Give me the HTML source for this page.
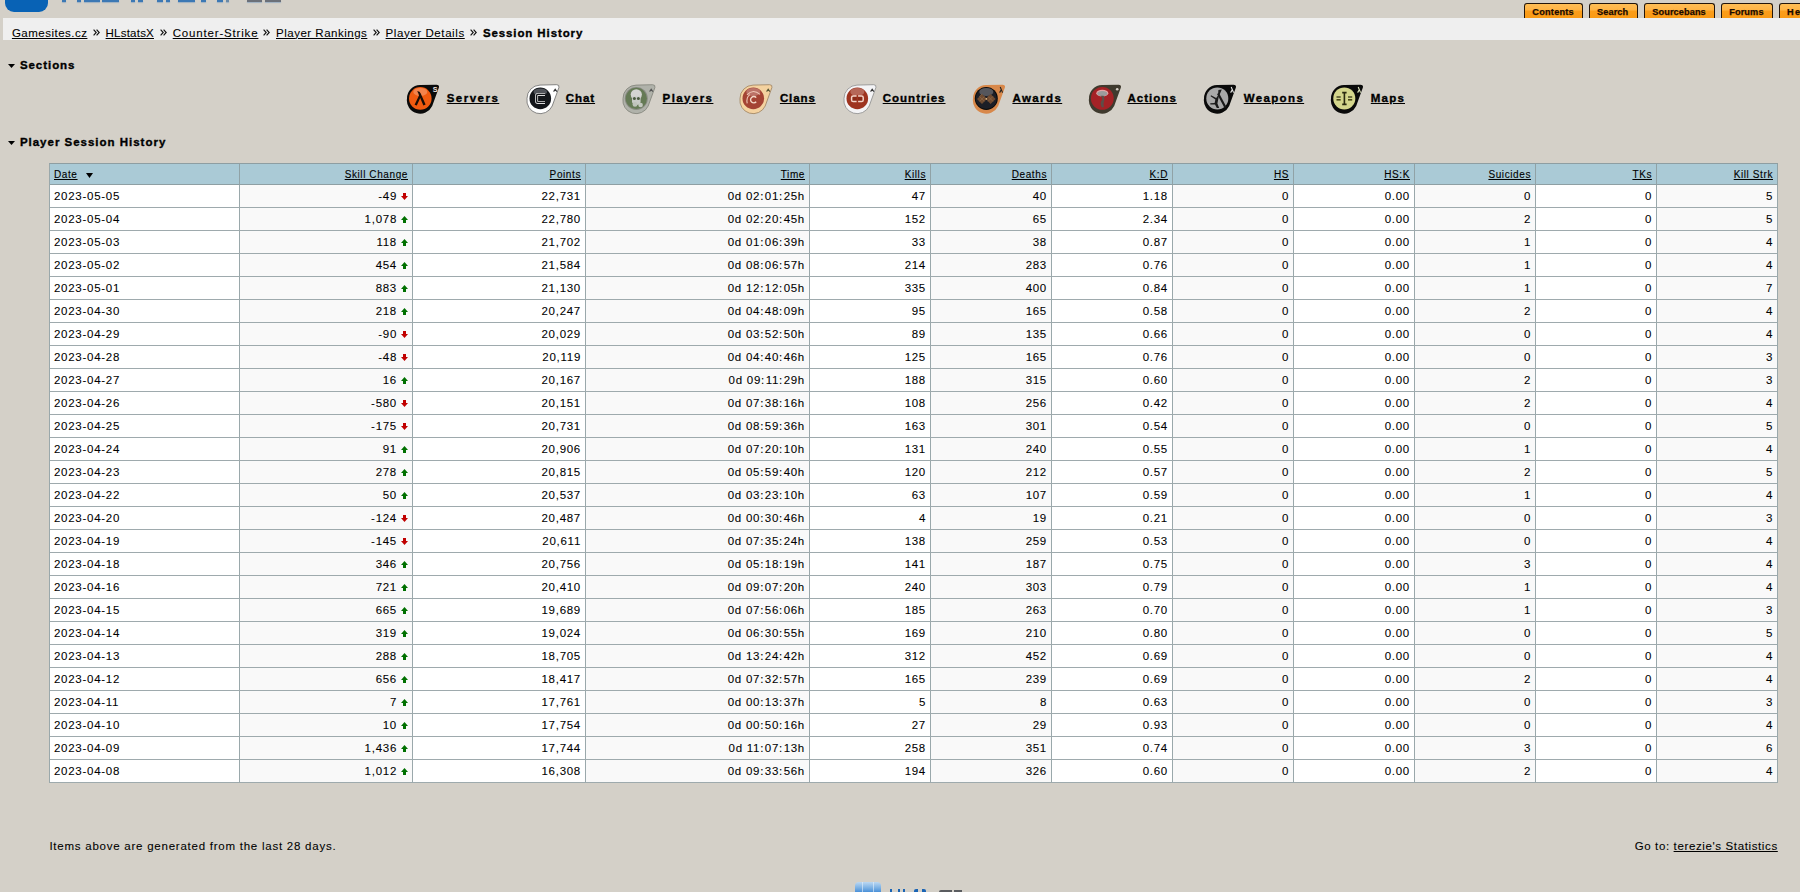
<!DOCTYPE html>
<html><head><meta charset="utf-8"><title>Session History</title>
<style>
html,body{margin:0;padding:0}
body{width:1800px;height:892px;overflow:hidden;position:relative;background:#d4d0c8;font-family:"Liberation Sans", sans-serif;color:#000}
.a{position:absolute;white-space:nowrap;text-underline-offset:1px}
.bar{position:absolute;left:3px;top:18px;width:1797px;height:22px;background:#efefef}
.tab{position:absolute;top:3px;height:15px;border:1px solid #24160a;border-bottom:none;border-radius:3px 3px 0 0;box-sizing:border-box;background:linear-gradient(#ffbe55 0,#ffb445 6px,#fb9d1a 7px,#f99a14 100%)}
.tri{position:absolute;left:8px;width:0;height:0;border-left:3.5px solid transparent;border-right:3.5px solid transparent;border-top:4px solid #000}
table.dt{position:absolute;left:49px;top:163px;border-collapse:separate;border-spacing:0;table-layout:fixed;width:1729px;border-left:1px solid #9aa8ab;border-top:1px solid #8e9ea2}
.dt td{box-sizing:border-box;border-right:1px solid #9aa8ab;border-bottom:1px solid #9eaaad;padding:0 4px 0 4px;text-align:right;white-space:nowrap;overflow:hidden}
.dt td.c0{text-align:left}
.dt td.h{-webkit-text-stroke:0.1px #000;height:21px;background:#aacad6;font-size:10px;line-height:19px;padding-top:1px;letter-spacing:0.599px;border-bottom-color:#8e9fa3;border-right-color:#90a2a6}
.dt td.h u{text-underline-offset:1px}
.dt td.d{-webkit-text-stroke:0.08px #000;height:23px;font-size:11.5px;line-height:22px;letter-spacing:0.725px;color:#000}
.b1{background:#ffffff}
.cl{letter-spacing:1.4px}
.b2{background:#f9f9f9}
.ar{display:inline-block;vertical-align:baseline;margin-left:4px;position:relative;top:0px}
.st{display:inline-block;margin-left:8px;vertical-align:baseline}
.ic{position:absolute;top:83px;width:34px;height:32px}
</style></head><body>
<div style="position:absolute;left:5px;top:-12px;width:43px;height:24px;border-radius:9px;background:#0862b5"></div>
<div style="position:absolute;left:62px;top:0;width:4px;height:2px;background:#3c78b4;box-shadow:0 1px 1px rgba(60,120,190,0.35)"></div><div style="position:absolute;left:77px;top:0;width:4px;height:2px;background:#3c78b4;box-shadow:0 1px 1px rgba(60,120,190,0.35)"></div><div style="position:absolute;left:84px;top:0;width:16px;height:2px;background:#3c78b4;box-shadow:0 1px 1px rgba(60,120,190,0.35)"></div><div style="position:absolute;left:102px;top:0;width:17px;height:2px;background:#3c78b4;box-shadow:0 1px 1px rgba(60,120,190,0.35)"></div><div style="position:absolute;left:131px;top:0;width:4px;height:2px;background:#3c78b4;box-shadow:0 1px 1px rgba(60,120,190,0.35)"></div><div style="position:absolute;left:138px;top:0;width:5px;height:2px;background:#3c78b4;box-shadow:0 1px 1px rgba(60,120,190,0.35)"></div><div style="position:absolute;left:157px;top:0;width:6px;height:2px;background:#3c78b4;box-shadow:0 1px 1px rgba(60,120,190,0.35)"></div><div style="position:absolute;left:166px;top:0;width:4px;height:2px;background:#3c78b4;box-shadow:0 1px 1px rgba(60,120,190,0.35)"></div><div style="position:absolute;left:178px;top:0;width:17px;height:2px;background:#3c78b4;box-shadow:0 1px 1px rgba(60,120,190,0.35)"></div><div style="position:absolute;left:201px;top:0;width:5px;height:2px;background:#3c78b4;box-shadow:0 1px 1px rgba(60,120,190,0.35)"></div><div style="position:absolute;left:217px;top:0;width:6px;height:2px;background:#3c78b4;box-shadow:0 1px 1px rgba(60,120,190,0.35)"></div><div style="position:absolute;left:226px;top:0;width:3px;height:2px;background:#6a8aa8;box-shadow:0 1px 1px rgba(60,120,190,0.35)"></div><div style="position:absolute;left:247px;top:0;width:15px;height:2px;background:#6b7079;box-shadow:0 1px 1px rgba(60,120,190,0.35)"></div><div style="position:absolute;left:265px;top:0;width:16px;height:2px;background:#6b7079;box-shadow:0 1px 1px rgba(60,120,190,0.35)"></div>
<div class="bar"></div>
<div class="tab" style="left:1524px;width:59px"></div>
<div class="tab" style="left:1589px;width:49px"></div>
<div class="tab" style="left:1644px;width:71px"></div>
<div class="tab" style="left:1721px;width:52px"></div>
<div class="tab" style="left:1779px;width:40px"></div>
<svg class="a" style="left:8px;top:64px" width="7" height="4" viewBox="0 0 7 4"><path d="M0 0H7L3.5 4Z" fill="#000"/></svg>
<svg class="a" style="left:8px;top:141px" width="7" height="4" viewBox="0 0 7 4"><path d="M0 0H7L3.5 4Z" fill="#000"/></svg>
<svg class="a" style="left:93px;top:29px" width="7" height="7" viewBox="0 0 7 7"><path d="M0.6 0.6L3.2 3.5L0.6 6.4M3.6 0.6L6.2 3.5L3.6 6.4" stroke="#111" stroke-width="1.15" fill="none"/></svg><svg class="a" style="left:160px;top:29px" width="7" height="7" viewBox="0 0 7 7"><path d="M0.6 0.6L3.2 3.5L0.6 6.4M3.6 0.6L6.2 3.5L3.6 6.4" stroke="#111" stroke-width="1.15" fill="none"/></svg><svg class="a" style="left:263px;top:29px" width="7" height="7" viewBox="0 0 7 7"><path d="M0.6 0.6L3.2 3.5L0.6 6.4M3.6 0.6L6.2 3.5L3.6 6.4" stroke="#111" stroke-width="1.15" fill="none"/></svg><svg class="a" style="left:373px;top:29px" width="7" height="7" viewBox="0 0 7 7"><path d="M0.6 0.6L3.2 3.5L0.6 6.4M3.6 0.6L6.2 3.5L3.6 6.4" stroke="#111" stroke-width="1.15" fill="none"/></svg><svg class="a" style="left:470px;top:29px" width="7" height="7" viewBox="0 0 7 7"><path d="M0.6 0.6L3.2 3.5L0.6 6.4M3.6 0.6L6.2 3.5L3.6 6.4" stroke="#111" stroke-width="1.15" fill="none"/></svg>
<div class="a" style="left:11.9px;top:26.52px;font-size:11.5px;line-height:13px;font-weight:normal;letter-spacing:0.490px;text-decoration:underline;color:#000;-webkit-text-stroke:0.08px #000">Gamesites.cz</div><div class="a" style="left:105.6px;top:26.52px;font-size:11.5px;line-height:13px;font-weight:normal;letter-spacing:0.216px;text-decoration:underline;color:#000;-webkit-text-stroke:0.08px #000">HLstatsX</div><div class="a" style="left:172.7px;top:26.52px;font-size:11.5px;line-height:13px;font-weight:normal;letter-spacing:0.828px;text-decoration:underline;color:#000;-webkit-text-stroke:0.08px #000">Counter-Strike</div><div class="a" style="left:276.0px;top:26.52px;font-size:11.5px;line-height:13px;font-weight:normal;letter-spacing:0.508px;text-decoration:underline;color:#000;-webkit-text-stroke:0.08px #000">Player Rankings</div><div class="a" style="left:385.6px;top:26.52px;font-size:11.5px;line-height:13px;font-weight:normal;letter-spacing:0.585px;text-decoration:underline;color:#000;-webkit-text-stroke:0.08px #000">Player Details</div><div class="a" style="left:482.9px;top:26.52px;font-size:11.5px;line-height:13px;font-weight:bold;letter-spacing:0.898px;text-decoration:none;color:#000;-webkit-text-stroke:0.35px #000">Session History</div><div class="a" style="left:19.9px;top:58.52px;font-size:11.5px;line-height:13px;font-weight:bold;letter-spacing:0.952px;text-decoration:none;color:#000;-webkit-text-stroke:0.35px #000">Sections</div><div class="a" style="left:19.9px;top:135.52px;font-size:11.5px;line-height:13px;font-weight:bold;letter-spacing:0.988px;text-decoration:none;color:#000;-webkit-text-stroke:0.35px #000">Player Session History</div><div class="a" style="left:446.7px;top:91.52px;font-size:11.5px;line-height:13px;font-weight:bold;letter-spacing:1.482px;text-decoration:underline;color:#000;-webkit-text-stroke:0.35px #000">Servers</div><div class="a" style="left:565.7px;top:91.52px;font-size:11.5px;line-height:13px;font-weight:bold;letter-spacing:0.958px;text-decoration:underline;color:#000;-webkit-text-stroke:0.35px #000">Chat</div><div class="a" style="left:662.6px;top:91.52px;font-size:11.5px;line-height:13px;font-weight:bold;letter-spacing:1.412px;text-decoration:underline;color:#000;-webkit-text-stroke:0.35px #000">Players</div><div class="a" style="left:779.9px;top:91.52px;font-size:11.5px;line-height:13px;font-weight:bold;letter-spacing:0.895px;text-decoration:underline;color:#000;-webkit-text-stroke:0.35px #000">Clans</div><div class="a" style="left:882.7px;top:91.52px;font-size:11.5px;line-height:13px;font-weight:bold;letter-spacing:1.016px;text-decoration:underline;color:#000;-webkit-text-stroke:0.35px #000">Countries</div><div class="a" style="left:1012.4px;top:91.52px;font-size:11.5px;line-height:13px;font-weight:bold;letter-spacing:1.412px;text-decoration:underline;color:#000;-webkit-text-stroke:0.35px #000">Awards</div><div class="a" style="left:1127.4px;top:91.52px;font-size:11.5px;line-height:13px;font-weight:bold;letter-spacing:1.038px;text-decoration:underline;color:#000;-webkit-text-stroke:0.35px #000">Actions</div><div class="a" style="left:1243.7px;top:91.52px;font-size:11.5px;line-height:13px;font-weight:bold;letter-spacing:1.365px;text-decoration:underline;color:#000;-webkit-text-stroke:0.35px #000">Weapons</div><div class="a" style="left:1370.8px;top:91.52px;font-size:11.5px;line-height:13px;font-weight:bold;letter-spacing:1.200px;text-decoration:underline;color:#000;-webkit-text-stroke:0.35px #000">Maps</div><div class="a" style="left:1532.3px;top:6.81px;font-size:9.2px;line-height:11px;font-weight:bold;letter-spacing:0.229px;text-decoration:none;color:#1a0a00;-webkit-text-stroke:0.25px #1a0a00">Contents</div><div class="a" style="left:1596.9px;top:6.81px;font-size:9.2px;line-height:11px;font-weight:bold;letter-spacing:0.134px;text-decoration:none;color:#1a0a00;-webkit-text-stroke:0.25px #1a0a00">Search</div><div class="a" style="left:1652.3px;top:6.81px;font-size:9.2px;line-height:11px;font-weight:bold;letter-spacing:0.091px;text-decoration:none;color:#1a0a00;-webkit-text-stroke:0.25px #1a0a00">Sourcebans</div><div class="a" style="left:1729.2px;top:6.81px;font-size:9.2px;line-height:11px;font-weight:bold;letter-spacing:0.124px;text-decoration:none;color:#1a0a00;-webkit-text-stroke:0.25px #1a0a00">Forums</div><div class="a" style="left:1787.0px;top:6.81px;font-size:9.2px;line-height:11px;font-weight:bold;letter-spacing:1.368px;text-decoration:none;color:#1a0a00;-webkit-text-stroke:0.25px #1a0a00">Help</div><div class="a" style="left:49.4px;top:839.52px;font-size:11.5px;line-height:13px;font-weight:normal;letter-spacing:0.758px;text-decoration:none;color:#000;-webkit-text-stroke:0.08px #000">Items above are generated from the last 28 days.</div><div class="a" style="left:1634.7px;top:839.52px;font-size:11.5px;line-height:13px;font-weight:normal;letter-spacing:0.626px;text-decoration:none;color:#000;-webkit-text-stroke:0.08px #000">Go to: <u>terezie's Statistics</u></div>
<div class="ic" style="left:406px;top:84px"><svg width="34" height="32" viewBox="0 0.6 34 32"><path d="M1 15A13.3 13.3 0 0 1 14 1.7L30.6 1.3Q33.6 1.3 32.9 4.2L26.2 22.6A13.3 13.3 0 0 1 1 15Z" fill="#0a0a0a"/><circle cx="14.3" cy="15" r="11.3" fill="#f05a10"/><ellipse cx="14.3" cy="8.5" rx="7" ry="4" fill="#fff" opacity="0.25"/><path d="M11.2 7.8Q13.6 7.4 14.6 9.8L19.6 21.2L17.4 22.2L14.2 14.6L10.8 22.2L8.6 21.4L13 12L12.4 10.2Z" fill="#1a0d06"/><text x="26.8" y="9" font-family="Liberation Sans" font-weight="bold" font-size="7.2" fill="#f0e4e0">S</text></svg></div><div class="ic" style="left:526px;top:84px"><svg width="34" height="32" viewBox="0 0.6 34 32"><path d="M1 15A13.3 13.3 0 0 1 14 1.7L30.6 1.3Q33.6 1.3 32.9 4.2L26.2 22.6A13.3 13.3 0 0 1 1 15Z" fill="#ffffff" stroke="#6a6a6a" stroke-width="0.8"/><circle cx="14.3" cy="15" r="10.8" fill="#14171b"/><ellipse cx="14.3" cy="8.6" rx="6.8" ry="3.4" fill="#6a6e74" opacity="0.7"/><path d="M19 11H11.8Q10.6 11 10.6 12.2V17.8Q10.6 19 11.8 19H19" stroke="#dcdcdc" stroke-width="3" fill="none"/><path d="M19 11H11.8Q10.6 11 10.6 12.2V17.8Q10.6 19 11.8 19H19" stroke="#14171b" stroke-width="1.3" fill="none"/><path d="M27.6 8.2L29.2 5.8L30.8 8.2" stroke="#333" stroke-width="1.1" fill="none"/></svg></div><div class="ic" style="left:622px;top:84px"><svg width="34" height="32" viewBox="0 0.6 34 32"><path d="M1 15A13.3 13.3 0 0 1 14 1.7L30.6 1.3Q33.6 1.3 32.9 4.2L26.2 22.6A13.3 13.3 0 0 1 1 15Z" fill="#b0b2aa" stroke="#808278" stroke-width="0.8"/><circle cx="14.3" cy="15" r="11.5" fill="#8a8c84"/><circle cx="14.3" cy="15" r="10.6" fill="#657a55"/><ellipse cx="14.3" cy="11.2" rx="5.6" ry="5.4" fill="#d4d4d2"/><path d="M10 13H18.6V18.5Q18 21.5 14.3 21.5Q10.6 21.5 10 18.5Z" fill="#c8cac6"/><circle cx="12.4" cy="15" r="1.5" fill="#4a5a40"/><circle cx="16.4" cy="15" r="1.5" fill="#4a5a40"/><circle cx="13" cy="21" r="2.4" fill="#bfc3bc"/><circle cx="18.6" cy="21.6" r="2.3" fill="#c4c8c0"/><path d="M27.6 8.2L29.2 5.8L30.8 8.2" stroke="#555" stroke-width="1.1" fill="none"/></svg></div><div class="ic" style="left:739px;top:84px"><svg width="34" height="32" viewBox="0 0.6 34 32"><path d="M1 15A13.3 13.3 0 0 1 14 1.7L30.6 1.3Q33.6 1.3 32.9 4.2L26.2 22.6A13.3 13.3 0 0 1 1 15Z" fill="#f4d2a0" stroke="#9a8060" stroke-width="0.8"/><circle cx="14.3" cy="15" r="10.8" fill="#a44334"/><ellipse cx="14.3" cy="8.5" rx="7" ry="4" fill="#fff" opacity="0.25"/><path d="M8 11.5Q14 5 21 11" stroke="#f0c8b8" stroke-width="1.1" fill="none"/><path d="M8.2 20Q7 14 10.8 11.2" stroke="#f0c8b8" stroke-width="1.1" fill="none"/><path d="M17.2 14.2A3.2 3.2 0 1 0 17.2 18.4" stroke="#f4d8c8" stroke-width="1.4" fill="none"/><path d="M27.6 8.2L29.2 5.8L30.8 8.2" stroke="#553" stroke-width="1.1" fill="none"/></svg></div><div class="ic" style="left:843px;top:84px"><svg width="34" height="32" viewBox="0 0.6 34 32"><path d="M1 15A13.3 13.3 0 0 1 14 1.7L30.6 1.3Q33.6 1.3 32.9 4.2L26.2 22.6A13.3 13.3 0 0 1 1 15Z" fill="#f4f4f6" stroke="#8a8a8a" stroke-width="0.8"/><circle cx="14.3" cy="15" r="10.8" fill="#9e3420"/><ellipse cx="14.3" cy="8.5" rx="7" ry="4" fill="#fff" opacity="0.25"/><rect x="8.6" y="12.6" width="11.6" height="5.6" rx="1.6" stroke="#f4d4c8" stroke-width="1.5" fill="#8a2a18"/><rect x="13.6" y="11.5" width="1.5" height="8" fill="#9e3420"/><path d="M27.6 8.2L29.2 5.8L30.8 8.2" stroke="#333" stroke-width="1.1" fill="none"/></svg></div><div class="ic" style="left:972px;top:84px"><svg width="34" height="32" viewBox="0 0.6 34 32"><path d="M1 15A13.3 13.3 0 0 1 14 1.7L30.6 1.3Q33.6 1.3 32.9 4.2L26.2 22.6A13.3 13.3 0 0 1 1 15Z" fill="#d8884a"/><circle cx="14.3" cy="15" r="11.5" fill="#0a0a0a"/><circle cx="14.3" cy="15" r="10.6" fill="#1c1e26"/><ellipse cx="14.3" cy="8.5" rx="7" ry="4" fill="#fff" opacity="0.25"/><path d="M5 15.5L10 10.5L14.3 14.8L18.6 10.5L23.6 15.5L18.6 20.5L14.3 16.2L10 20.5Z" fill="#6e4a30"/><path d="M7.5 13L12.5 18M10 10.5L7.5 13M12.5 13L7.5 18M16 13L21 18M21 13L16 18" stroke="#94704c" stroke-width="0.8" opacity="0.8"/><circle cx="14.3" cy="15.5" r="0.8" fill="#e8c890"/><path d="M28.2 3.6L30.6 9.2M29.3 6.3L27.6 9.2" stroke="#222" stroke-width="1.1" fill="none"/></svg></div><div class="ic" style="left:1088px;top:84px"><svg width="34" height="32" viewBox="0 0.6 34 32"><path d="M1 15A13.3 13.3 0 0 1 14 1.7L30.6 1.3Q33.6 1.3 32.9 4.2L26.2 22.6A13.3 13.3 0 0 1 1 15Z" fill="#3f3a2e"/><circle cx="14.3" cy="15" r="11.4" fill="#a42226"/><ellipse cx="14.3" cy="9.8" rx="6" ry="3.4" fill="#e8a4a4"/><ellipse cx="14.3" cy="10.2" rx="5" ry="2.6" fill="#9c9c9c"/><path d="M12.6 12.3Q15.6 15.5 13 18.2Q11.8 20.8 13.8 24L16 23.6Q15 20 16.2 17.4Q17.2 14.6 15.6 12.3Z" fill="#5e4e48"/><circle cx="29.2" cy="5.8" r="1.3" fill="#d8d0c8"/></svg></div><div class="ic" style="left:1203px;top:84px"><svg width="34" height="32" viewBox="0 0.6 34 32"><path d="M1 15A13.3 13.3 0 0 1 14 1.7L30.6 1.3Q33.6 1.3 32.9 4.2L26.2 22.6A13.3 13.3 0 0 1 1 15Z" fill="#0a0a0a"/><circle cx="14.3" cy="15" r="11.0" fill="#a8a8a8"/><path d="M15.4 6.5L15 12L13.2 14.5L8 11.8L7.6 12.8L12.4 16L11.6 19.5L7.2 19.8L7.4 21L12 21L13.8 24.5L16.2 24.5L14.4 20L15.8 13L18.8 6Z" fill="#1a1a1a"/><path d="M15 10L22.5 24" stroke="#1a1a1a" stroke-width="2.2"/><path d="M28.2 3.6L30.6 9.2M29.3 6.3L27.6 9.2" stroke="#e8e8e8" stroke-width="1.1" fill="none"/></svg></div><div class="ic" style="left:1330px;top:84px"><svg width="34" height="32" viewBox="0 0.6 34 32"><path d="M1 15A13.3 13.3 0 0 1 14 1.7L30.6 1.3Q33.6 1.3 32.9 4.2L26.2 22.6A13.3 13.3 0 0 1 1 15Z" fill="#0a0a0a"/><circle cx="14.3" cy="15" r="11.0" fill="#d4d68c"/><rect x="6.5" y="13" width="4.2" height="1.2" fill="#2a2a10"/><rect x="6.5" y="15.6" width="4.2" height="1.6" fill="#4a4a18"/><rect x="18" y="13" width="4.2" height="1.2" fill="#2a2a10"/><rect x="18" y="15.6" width="4.2" height="1.6" fill="#4a4a18"/><path d="M12.2 9.2H16.6M14.4 9.2V21M12.2 21H16.6" stroke="#2a2a10" stroke-width="1.6" fill="none"/><path d="M28.2 3.6L30.6 9.2M29.3 6.3L27.6 9.2" stroke="#e0e8c0" stroke-width="1.1" fill="none"/></svg></div>
<div style="position:absolute;left:855px;top:882px;width:26px;height:20px;border-radius:4px 4px 0 0;background:linear-gradient(#bcd8f2,#7ab0e4 6px,#4a90d8 10px)"></div>
<div style="position:absolute;left:862px;top:882px;width:1px;height:10px;background:rgba(230,240,250,0.6)"></div>
<div style="position:absolute;left:873px;top:882px;width:1px;height:10px;background:rgba(230,240,250,0.6)"></div>
<div style="position:absolute;left:890px;top:889px;width:2px;height:3px;background:#1a64b4"></div>
<div style="position:absolute;left:898px;top:889px;width:2px;height:3px;background:#1a64b4"></div>
<div style="position:absolute;left:903px;top:889px;width:2px;height:3px;background:#1a64b4"></div>
<div style="position:absolute;left:914px;top:889px;width:4px;height:3px;background:#1a64b4;border-radius:2px 0 0 0"></div>
<div style="position:absolute;left:922px;top:889px;width:4px;height:3px;background:#1a64b4;border-radius:0 2px 0 0"></div>
<div style="position:absolute;left:939px;top:890px;width:13px;height:2px;background:#5a5c60;border-radius:3px 0 0 0"></div>
<div style="position:absolute;left:954px;top:890px;width:8px;height:2px;background:#5a5c60"></div>
<table class="dt"><colgroup><col style="width:190px"><col style="width:173px"><col style="width:173px"><col style="width:224px"><col style="width:121px"><col style="width:121px"><col style="width:121px"><col style="width:121px"><col style="width:121px"><col style="width:121px"><col style="width:121px"><col style="width:121px"></colgroup><tr class="hr"><td class="h c0"><u>Date</u><svg class="st" width="7" height="5" viewBox="0 0 7 5"><path d="M0 0H7L3.5 5Z" fill="#000"/></svg></td><td class="h c1"><u>Skill Change</u></td><td class="h c2"><u>Points</u></td><td class="h c3"><u>Time</u></td><td class="h c4"><u>Kills</u></td><td class="h c5"><u>Deaths</u></td><td class="h c6"><u>K:D</u></td><td class="h c7"><u>HS</u></td><td class="h c8"><u>HS:K</u></td><td class="h c9"><u>Suicides</u></td><td class="h c10"><u>TKs</u></td><td class="h c11"><u>Kill Strk</u></td></tr><tr><td class="d c0 b1">2023-05-05</td><td class="d c1 b2">-49<svg class="ar" width="7" height="7" viewBox="0 0 7 7"><path d="M2 0H5V3H7L3.5 7L0 3H2Z" fill="#c00000"/></svg></td><td class="d c2 b1">22,731</td><td class="d c3 b2">0d 02<span class="cl">:</span>01<span class="cl">:</span>25h</td><td class="d c4 b1">47</td><td class="d c5 b2">40</td><td class="d c6 b1">1.18</td><td class="d c7 b2">0</td><td class="d c8 b1">0.00</td><td class="d c9 b2">0</td><td class="d c10 b1">0</td><td class="d c11 b2">5</td></tr><tr><td class="d c0 b1">2023-05-04</td><td class="d c1 b2">1,078<svg class="ar" width="7" height="7" viewBox="0 0 7 7"><path d="M3.5 0L7 4H5V7H2V4H0Z" fill="#007000"/></svg></td><td class="d c2 b1">22,780</td><td class="d c3 b2">0d 02<span class="cl">:</span>20<span class="cl">:</span>45h</td><td class="d c4 b1">152</td><td class="d c5 b2">65</td><td class="d c6 b1">2.34</td><td class="d c7 b2">0</td><td class="d c8 b1">0.00</td><td class="d c9 b2">2</td><td class="d c10 b1">0</td><td class="d c11 b2">5</td></tr><tr><td class="d c0 b1">2023-05-03</td><td class="d c1 b2">118<svg class="ar" width="7" height="7" viewBox="0 0 7 7"><path d="M3.5 0L7 4H5V7H2V4H0Z" fill="#007000"/></svg></td><td class="d c2 b1">21,702</td><td class="d c3 b2">0d 01<span class="cl">:</span>06<span class="cl">:</span>39h</td><td class="d c4 b1">33</td><td class="d c5 b2">38</td><td class="d c6 b1">0.87</td><td class="d c7 b2">0</td><td class="d c8 b1">0.00</td><td class="d c9 b2">1</td><td class="d c10 b1">0</td><td class="d c11 b2">4</td></tr><tr><td class="d c0 b1">2023-05-02</td><td class="d c1 b2">454<svg class="ar" width="7" height="7" viewBox="0 0 7 7"><path d="M3.5 0L7 4H5V7H2V4H0Z" fill="#007000"/></svg></td><td class="d c2 b1">21,584</td><td class="d c3 b2">0d 08<span class="cl">:</span>06<span class="cl">:</span>57h</td><td class="d c4 b1">214</td><td class="d c5 b2">283</td><td class="d c6 b1">0.76</td><td class="d c7 b2">0</td><td class="d c8 b1">0.00</td><td class="d c9 b2">1</td><td class="d c10 b1">0</td><td class="d c11 b2">4</td></tr><tr><td class="d c0 b1">2023-05-01</td><td class="d c1 b2">883<svg class="ar" width="7" height="7" viewBox="0 0 7 7"><path d="M3.5 0L7 4H5V7H2V4H0Z" fill="#007000"/></svg></td><td class="d c2 b1">21,130</td><td class="d c3 b2">0d 12<span class="cl">:</span>12<span class="cl">:</span>05h</td><td class="d c4 b1">335</td><td class="d c5 b2">400</td><td class="d c6 b1">0.84</td><td class="d c7 b2">0</td><td class="d c8 b1">0.00</td><td class="d c9 b2">1</td><td class="d c10 b1">0</td><td class="d c11 b2">7</td></tr><tr><td class="d c0 b1">2023-04-30</td><td class="d c1 b2">218<svg class="ar" width="7" height="7" viewBox="0 0 7 7"><path d="M3.5 0L7 4H5V7H2V4H0Z" fill="#007000"/></svg></td><td class="d c2 b1">20,247</td><td class="d c3 b2">0d 04<span class="cl">:</span>48<span class="cl">:</span>09h</td><td class="d c4 b1">95</td><td class="d c5 b2">165</td><td class="d c6 b1">0.58</td><td class="d c7 b2">0</td><td class="d c8 b1">0.00</td><td class="d c9 b2">2</td><td class="d c10 b1">0</td><td class="d c11 b2">4</td></tr><tr><td class="d c0 b1">2023-04-29</td><td class="d c1 b2">-90<svg class="ar" width="7" height="7" viewBox="0 0 7 7"><path d="M2 0H5V3H7L3.5 7L0 3H2Z" fill="#c00000"/></svg></td><td class="d c2 b1">20,029</td><td class="d c3 b2">0d 03<span class="cl">:</span>52<span class="cl">:</span>50h</td><td class="d c4 b1">89</td><td class="d c5 b2">135</td><td class="d c6 b1">0.66</td><td class="d c7 b2">0</td><td class="d c8 b1">0.00</td><td class="d c9 b2">0</td><td class="d c10 b1">0</td><td class="d c11 b2">4</td></tr><tr><td class="d c0 b1">2023-04-28</td><td class="d c1 b2">-48<svg class="ar" width="7" height="7" viewBox="0 0 7 7"><path d="M2 0H5V3H7L3.5 7L0 3H2Z" fill="#c00000"/></svg></td><td class="d c2 b1">20,119</td><td class="d c3 b2">0d 04<span class="cl">:</span>40<span class="cl">:</span>46h</td><td class="d c4 b1">125</td><td class="d c5 b2">165</td><td class="d c6 b1">0.76</td><td class="d c7 b2">0</td><td class="d c8 b1">0.00</td><td class="d c9 b2">0</td><td class="d c10 b1">0</td><td class="d c11 b2">3</td></tr><tr><td class="d c0 b1">2023-04-27</td><td class="d c1 b2">16<svg class="ar" width="7" height="7" viewBox="0 0 7 7"><path d="M3.5 0L7 4H5V7H2V4H0Z" fill="#007000"/></svg></td><td class="d c2 b1">20,167</td><td class="d c3 b2">0d 09<span class="cl">:</span>11<span class="cl">:</span>29h</td><td class="d c4 b1">188</td><td class="d c5 b2">315</td><td class="d c6 b1">0.60</td><td class="d c7 b2">0</td><td class="d c8 b1">0.00</td><td class="d c9 b2">2</td><td class="d c10 b1">0</td><td class="d c11 b2">3</td></tr><tr><td class="d c0 b1">2023-04-26</td><td class="d c1 b2">-580<svg class="ar" width="7" height="7" viewBox="0 0 7 7"><path d="M2 0H5V3H7L3.5 7L0 3H2Z" fill="#c00000"/></svg></td><td class="d c2 b1">20,151</td><td class="d c3 b2">0d 07<span class="cl">:</span>38<span class="cl">:</span>16h</td><td class="d c4 b1">108</td><td class="d c5 b2">256</td><td class="d c6 b1">0.42</td><td class="d c7 b2">0</td><td class="d c8 b1">0.00</td><td class="d c9 b2">2</td><td class="d c10 b1">0</td><td class="d c11 b2">4</td></tr><tr><td class="d c0 b1">2023-04-25</td><td class="d c1 b2">-175<svg class="ar" width="7" height="7" viewBox="0 0 7 7"><path d="M2 0H5V3H7L3.5 7L0 3H2Z" fill="#c00000"/></svg></td><td class="d c2 b1">20,731</td><td class="d c3 b2">0d 08<span class="cl">:</span>59<span class="cl">:</span>36h</td><td class="d c4 b1">163</td><td class="d c5 b2">301</td><td class="d c6 b1">0.54</td><td class="d c7 b2">0</td><td class="d c8 b1">0.00</td><td class="d c9 b2">0</td><td class="d c10 b1">0</td><td class="d c11 b2">5</td></tr><tr><td class="d c0 b1">2023-04-24</td><td class="d c1 b2">91<svg class="ar" width="7" height="7" viewBox="0 0 7 7"><path d="M3.5 0L7 4H5V7H2V4H0Z" fill="#007000"/></svg></td><td class="d c2 b1">20,906</td><td class="d c3 b2">0d 07<span class="cl">:</span>20<span class="cl">:</span>10h</td><td class="d c4 b1">131</td><td class="d c5 b2">240</td><td class="d c6 b1">0.55</td><td class="d c7 b2">0</td><td class="d c8 b1">0.00</td><td class="d c9 b2">1</td><td class="d c10 b1">0</td><td class="d c11 b2">4</td></tr><tr><td class="d c0 b1">2023-04-23</td><td class="d c1 b2">278<svg class="ar" width="7" height="7" viewBox="0 0 7 7"><path d="M3.5 0L7 4H5V7H2V4H0Z" fill="#007000"/></svg></td><td class="d c2 b1">20,815</td><td class="d c3 b2">0d 05<span class="cl">:</span>59<span class="cl">:</span>40h</td><td class="d c4 b1">120</td><td class="d c5 b2">212</td><td class="d c6 b1">0.57</td><td class="d c7 b2">0</td><td class="d c8 b1">0.00</td><td class="d c9 b2">2</td><td class="d c10 b1">0</td><td class="d c11 b2">5</td></tr><tr><td class="d c0 b1">2023-04-22</td><td class="d c1 b2">50<svg class="ar" width="7" height="7" viewBox="0 0 7 7"><path d="M3.5 0L7 4H5V7H2V4H0Z" fill="#007000"/></svg></td><td class="d c2 b1">20,537</td><td class="d c3 b2">0d 03<span class="cl">:</span>23<span class="cl">:</span>10h</td><td class="d c4 b1">63</td><td class="d c5 b2">107</td><td class="d c6 b1">0.59</td><td class="d c7 b2">0</td><td class="d c8 b1">0.00</td><td class="d c9 b2">1</td><td class="d c10 b1">0</td><td class="d c11 b2">4</td></tr><tr><td class="d c0 b1">2023-04-20</td><td class="d c1 b2">-124<svg class="ar" width="7" height="7" viewBox="0 0 7 7"><path d="M2 0H5V3H7L3.5 7L0 3H2Z" fill="#c00000"/></svg></td><td class="d c2 b1">20,487</td><td class="d c3 b2">0d 00<span class="cl">:</span>30<span class="cl">:</span>46h</td><td class="d c4 b1">4</td><td class="d c5 b2">19</td><td class="d c6 b1">0.21</td><td class="d c7 b2">0</td><td class="d c8 b1">0.00</td><td class="d c9 b2">0</td><td class="d c10 b1">0</td><td class="d c11 b2">3</td></tr><tr><td class="d c0 b1">2023-04-19</td><td class="d c1 b2">-145<svg class="ar" width="7" height="7" viewBox="0 0 7 7"><path d="M2 0H5V3H7L3.5 7L0 3H2Z" fill="#c00000"/></svg></td><td class="d c2 b1">20,611</td><td class="d c3 b2">0d 07<span class="cl">:</span>35<span class="cl">:</span>24h</td><td class="d c4 b1">138</td><td class="d c5 b2">259</td><td class="d c6 b1">0.53</td><td class="d c7 b2">0</td><td class="d c8 b1">0.00</td><td class="d c9 b2">0</td><td class="d c10 b1">0</td><td class="d c11 b2">4</td></tr><tr><td class="d c0 b1">2023-04-18</td><td class="d c1 b2">346<svg class="ar" width="7" height="7" viewBox="0 0 7 7"><path d="M3.5 0L7 4H5V7H2V4H0Z" fill="#007000"/></svg></td><td class="d c2 b1">20,756</td><td class="d c3 b2">0d 05<span class="cl">:</span>18<span class="cl">:</span>19h</td><td class="d c4 b1">141</td><td class="d c5 b2">187</td><td class="d c6 b1">0.75</td><td class="d c7 b2">0</td><td class="d c8 b1">0.00</td><td class="d c9 b2">3</td><td class="d c10 b1">0</td><td class="d c11 b2">4</td></tr><tr><td class="d c0 b1">2023-04-16</td><td class="d c1 b2">721<svg class="ar" width="7" height="7" viewBox="0 0 7 7"><path d="M3.5 0L7 4H5V7H2V4H0Z" fill="#007000"/></svg></td><td class="d c2 b1">20,410</td><td class="d c3 b2">0d 09<span class="cl">:</span>07<span class="cl">:</span>20h</td><td class="d c4 b1">240</td><td class="d c5 b2">303</td><td class="d c6 b1">0.79</td><td class="d c7 b2">0</td><td class="d c8 b1">0.00</td><td class="d c9 b2">1</td><td class="d c10 b1">0</td><td class="d c11 b2">4</td></tr><tr><td class="d c0 b1">2023-04-15</td><td class="d c1 b2">665<svg class="ar" width="7" height="7" viewBox="0 0 7 7"><path d="M3.5 0L7 4H5V7H2V4H0Z" fill="#007000"/></svg></td><td class="d c2 b1">19,689</td><td class="d c3 b2">0d 07<span class="cl">:</span>56<span class="cl">:</span>06h</td><td class="d c4 b1">185</td><td class="d c5 b2">263</td><td class="d c6 b1">0.70</td><td class="d c7 b2">0</td><td class="d c8 b1">0.00</td><td class="d c9 b2">1</td><td class="d c10 b1">0</td><td class="d c11 b2">3</td></tr><tr><td class="d c0 b1">2023-04-14</td><td class="d c1 b2">319<svg class="ar" width="7" height="7" viewBox="0 0 7 7"><path d="M3.5 0L7 4H5V7H2V4H0Z" fill="#007000"/></svg></td><td class="d c2 b1">19,024</td><td class="d c3 b2">0d 06<span class="cl">:</span>30<span class="cl">:</span>55h</td><td class="d c4 b1">169</td><td class="d c5 b2">210</td><td class="d c6 b1">0.80</td><td class="d c7 b2">0</td><td class="d c8 b1">0.00</td><td class="d c9 b2">0</td><td class="d c10 b1">0</td><td class="d c11 b2">5</td></tr><tr><td class="d c0 b1">2023-04-13</td><td class="d c1 b2">288<svg class="ar" width="7" height="7" viewBox="0 0 7 7"><path d="M3.5 0L7 4H5V7H2V4H0Z" fill="#007000"/></svg></td><td class="d c2 b1">18,705</td><td class="d c3 b2">0d 13<span class="cl">:</span>24<span class="cl">:</span>42h</td><td class="d c4 b1">312</td><td class="d c5 b2">452</td><td class="d c6 b1">0.69</td><td class="d c7 b2">0</td><td class="d c8 b1">0.00</td><td class="d c9 b2">0</td><td class="d c10 b1">0</td><td class="d c11 b2">4</td></tr><tr><td class="d c0 b1">2023-04-12</td><td class="d c1 b2">656<svg class="ar" width="7" height="7" viewBox="0 0 7 7"><path d="M3.5 0L7 4H5V7H2V4H0Z" fill="#007000"/></svg></td><td class="d c2 b1">18,417</td><td class="d c3 b2">0d 07<span class="cl">:</span>32<span class="cl">:</span>57h</td><td class="d c4 b1">165</td><td class="d c5 b2">239</td><td class="d c6 b1">0.69</td><td class="d c7 b2">0</td><td class="d c8 b1">0.00</td><td class="d c9 b2">2</td><td class="d c10 b1">0</td><td class="d c11 b2">4</td></tr><tr><td class="d c0 b1">2023-04-11</td><td class="d c1 b2">7<svg class="ar" width="7" height="7" viewBox="0 0 7 7"><path d="M3.5 0L7 4H5V7H2V4H0Z" fill="#007000"/></svg></td><td class="d c2 b1">17,761</td><td class="d c3 b2">0d 00<span class="cl">:</span>13<span class="cl">:</span>37h</td><td class="d c4 b1">5</td><td class="d c5 b2">8</td><td class="d c6 b1">0.63</td><td class="d c7 b2">0</td><td class="d c8 b1">0.00</td><td class="d c9 b2">0</td><td class="d c10 b1">0</td><td class="d c11 b2">3</td></tr><tr><td class="d c0 b1">2023-04-10</td><td class="d c1 b2">10<svg class="ar" width="7" height="7" viewBox="0 0 7 7"><path d="M3.5 0L7 4H5V7H2V4H0Z" fill="#007000"/></svg></td><td class="d c2 b1">17,754</td><td class="d c3 b2">0d 00<span class="cl">:</span>50<span class="cl">:</span>16h</td><td class="d c4 b1">27</td><td class="d c5 b2">29</td><td class="d c6 b1">0.93</td><td class="d c7 b2">0</td><td class="d c8 b1">0.00</td><td class="d c9 b2">0</td><td class="d c10 b1">0</td><td class="d c11 b2">4</td></tr><tr><td class="d c0 b1">2023-04-09</td><td class="d c1 b2">1,436<svg class="ar" width="7" height="7" viewBox="0 0 7 7"><path d="M3.5 0L7 4H5V7H2V4H0Z" fill="#007000"/></svg></td><td class="d c2 b1">17,744</td><td class="d c3 b2">0d 11<span class="cl">:</span>07<span class="cl">:</span>13h</td><td class="d c4 b1">258</td><td class="d c5 b2">351</td><td class="d c6 b1">0.74</td><td class="d c7 b2">0</td><td class="d c8 b1">0.00</td><td class="d c9 b2">3</td><td class="d c10 b1">0</td><td class="d c11 b2">6</td></tr><tr><td class="d c0 b1">2023-04-08</td><td class="d c1 b2">1,012<svg class="ar" width="7" height="7" viewBox="0 0 7 7"><path d="M3.5 0L7 4H5V7H2V4H0Z" fill="#007000"/></svg></td><td class="d c2 b1">16,308</td><td class="d c3 b2">0d 09<span class="cl">:</span>33<span class="cl">:</span>56h</td><td class="d c4 b1">194</td><td class="d c5 b2">326</td><td class="d c6 b1">0.60</td><td class="d c7 b2">0</td><td class="d c8 b1">0.00</td><td class="d c9 b2">2</td><td class="d c10 b1">0</td><td class="d c11 b2">4</td></tr></table>
</body></html>
